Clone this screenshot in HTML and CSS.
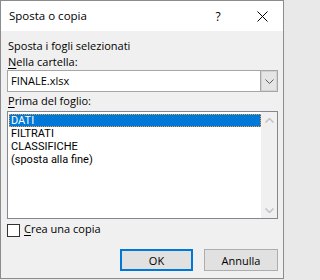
FILE: index.html
```html
<!DOCTYPE html>
<html lang="it">
<head>
<meta charset="utf-8">
<title>Sposta o copia</title>
<link rel="stylesheet" href="styles.css">
</head>
<body>
<div class="dialog">
  <div class="titlebar">
    <div class="title">Sposta o copia</div>
    <div class="tb-btn help">?</div>
    <div class="tb-btn close">
      <svg width="11" height="11" viewBox="0 0 11 11"><path d="M0.5 0.5 L10.5 10.5 M10.5 0.5 L0.5 10.5" stroke="#000" stroke-width="1" fill="none"/></svg>
    </div>
  </div>
  <div class="content">
    <div class="label l1">Sposta i fogli selezionati</div>
    <div class="label l2"><u>N</u>ella cartella:</div>
    <div class="combo">
      <div class="combo-text">FINALE.xlsx</div>
      <div class="combo-btn">
        <svg width="9" height="5" viewBox="0 0 9 5"><path d="M0.5 0.5 L4.5 4.5 L8.5 0.5" stroke="#5a5a5a" stroke-width="1" fill="none"/></svg>
      </div>
    </div>
    <div class="label l3"><u>P</u>rima del foglio:</div>
    <div class="listbox">
      <div class="items">
        <div class="item selected">DATI</div>
        <div class="item">FILTRATI</div>
        <div class="item">CLASSIFICHE</div>
        <div class="item">(sposta alla fine)</div>
      </div>
      <div class="scrollbar">
        <div class="arrow"><svg width="9" height="5" viewBox="0 0 9 5"><path d="M0.5 4.5 L4.5 0.5 L8.5 4.5" stroke="#c2c2c2" stroke-width="1.5" fill="none"/></svg></div>
        <div class="arrow"><svg width="9" height="5" viewBox="0 0 9 5"><path d="M0.5 0.5 L4.5 4.5 L8.5 0.5" stroke="#c2c2c2" stroke-width="1.5" fill="none"/></svg></div>
      </div>
    </div>
    <div class="check-row">
      <span class="checkbox"></span>
      <span class="check-label"><u>C</u>rea una copia</span>
    </div>
    <div class="buttons">
      <button class="btn btn-default">OK</button>
      <button class="btn btn-cancel">Annulla</button>
    </div>
  </div>
</div>
</body>
</html>
```
FILE: styles.css
```css
html, body {
  margin: 0;
  padding: 0;
}
body {
  width: 286px;
  height: 280px;
  overflow: hidden;
  background: #e9e9e9;
  font-family: "Open Sans", "Noto Sans", sans-serif;
  color: #000;
}
.dialog {
  width: 282px;
  height: 277px;
  border: 1px solid #8c8c8c;
  background: #f0f0f0;
  display: flex;
  flex-direction: column;
}
.titlebar {
  height: 30px;
  background: #fff;
  display: flex;
  align-items: center;
}
.title {
  flex: 1;
  padding-left: 8px;
  font-size: 11.5px;
  line-height: 30px;
}
.tb-btn {
  height: 30px;
  display: flex;
  align-items: center;
  justify-content: center;
}
.help {
  width: 46px;
  font-size: 12px;
}
.close {
  width: 42px;
}
.close svg {
  display: block;
}
.content {
  flex: 1;
  padding: 8px 5px 0 6px;
  display: flex;
  flex-direction: column;
}
.label {
  font-size: 11px;
  line-height: 13px;
  padding-left: 1px;
  white-space: nowrap;
}
.label u, .check-label u {
  text-decoration: underline;
  text-underline-offset: 2px;
}
.l1 { margin-bottom: 3px; }
.l2 { margin-bottom: 2px; }
.l3 { margin-top: 2px; }
.combo {
  height: 22px;
  box-sizing: border-box;
  border: 1px solid #a6a6a6;
  background: #fff;
  display: flex;
}
.combo-text {
  flex: 1;
  padding-left: 3px;
  font-size: 11px;
  line-height: 19px;
}
.combo-btn {
  width: 16px;
  background: #e5e5e5;
  border-left: 1px solid #a6a6a6;
  box-shadow: inset 0 0 0 1px #d2d2d2;
  display: flex;
  align-items: center;
  justify-content: center;
}
.combo-btn svg { display: block; }
.listbox {
  margin-top: 4px;
  height: 108px;
  box-sizing: border-box;
  border: 1px solid #828790;
  background: #fff;
  display: flex;
}
.items {
  flex: 1;
  padding: 2px 0 0 1px;
}
.item {
  height: 13px;
  line-height: 13px;
  padding-left: 2px;
  font-family: Roboto, "Open Sans", sans-serif;
  font-size: 11px;
  white-space: nowrap;
}
.item.selected {
  background: #0078d7;
  color: #fff;
  outline: 1px dotted #f39a3c;
  outline-offset: -1px;
}
.scrollbar {
  width: 16px;
  background: #f0f0f0;
  display: flex;
  flex-direction: column;
  justify-content: space-between;
}
.arrow {
  height: 16px;
  display: flex;
  align-items: center;
  justify-content: center;
}
.arrow svg { display: block; }
.check-row {
  margin-top: 5px;
  height: 13px;
  display: flex;
  align-items: flex-start;
}
.checkbox {
  width: 13px;
  height: 13px;
  box-sizing: border-box;
  border: 1px solid #333;
  background: #fff;
}
.check-label {
  margin-left: 4px;
  margin-top: -2px;
  font-size: 11px;
  line-height: 13px;
}
.buttons {
  margin-top: 12px;
  display: flex;
  justify-content: flex-end;
  gap: 11px;
}
.btn {
  height: 22px;
  box-sizing: border-box;
  padding: 0;
  background: #e1e1e1;
  border: 1px solid #adadad;
  font-family: "Open Sans", "Noto Sans", sans-serif;
  font-size: 11px;
  color: #000;
}
.btn-default {
  width: 73px;
  border-color: #0078d7;
  box-shadow: inset 0 0 0 1px #0078d7;
}
.btn-cancel {
  width: 74px;
}
```
